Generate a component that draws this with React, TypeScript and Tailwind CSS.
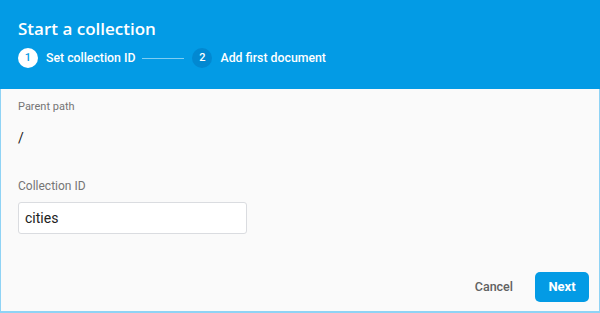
export default function App() {
  return (
    <div className="w-[600px] h-[313px] flex flex-col bg-white" style={{ fontFamily: 'Roboto, "Liberation Sans", sans-serif' }}>
      {/* Header */}
      <div className="h-[89px] shrink-0 bg-[#039be5] px-[18px] pt-[17px] text-white">
        <h1 className="text-[17px] leading-[24px] font-semibold" style={{ fontFamily: '"Open Sans", Roboto, sans-serif' }}>
          Start a collection
        </h1>
        <div className="mt-[7px] flex items-center h-[20px]">
          <span className="w-[20px] h-[20px] rounded-full bg-white text-[#039be5] text-[11px] font-medium flex items-center justify-center">1</span>
          <span className="ml-[8px] text-[12.3px] font-medium">Set collection ID</span>
          <span className="ml-[7px] w-[42px] h-px bg-[#7fcdf2]" />
          <span className="ml-[8px] w-[20px] h-[20px] rounded-full bg-[#0288d1] text-white text-[11px] font-medium flex items-center justify-center">2</span>
          <span className="ml-[8px] text-[12.3px] font-medium">Add first document</span>
        </div>
      </div>
      {/* Body */}
      <div className="flex-1 flex flex-col bg-[#fafafa] border-x border-b-2 border-[#8fd3f5] pl-[17px] pr-[10px]">
        <div className="mt-[11px] text-[11px] leading-[14px] text-[#757575]">Parent path</div>
        <div className="mt-[15px] text-[14px] leading-[18px] text-[#212121]">/</div>
        <div className="mt-[31px] text-[12px] leading-[16px] text-[#757575]">Collection ID</div>
        <div className="mt-[8px] w-[229px] h-[32px] bg-white border border-[#dadce0] rounded-[3px] flex items-center px-[6px] text-[14px] text-[#212121]">
          cities
        </div>
        <div className="mt-auto mb-[9px] flex items-center justify-end gap-[22px]">
          <button className="text-[12.5px] font-medium text-[#616161]">Cancel</button>
          <button className="w-[54px] h-[30px] rounded-[5px] bg-[#039be5] text-white text-[13px] font-bold">Next</button>
        </div>
      </div>
    </div>
  )
}
